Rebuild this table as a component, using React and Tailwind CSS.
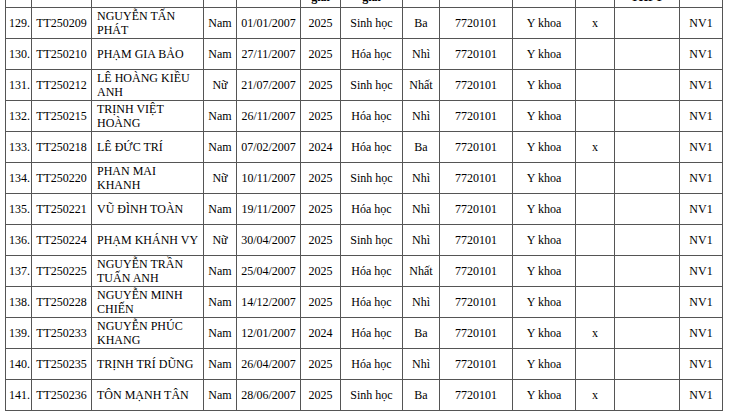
const rows = [
    ["129.", "TT250209", ["NGUYỄN TẤN", "PHÁT"], "Nam", "01/01/2007", "2025", "Sinh học", "Ba", "x"],
    ["130.", "TT250210", ["PHẠM GIA BẢO"], "Nam", "27/11/2007", "2025", "Hóa học", "Nhì", ""],
    ["131.", "TT250212", ["LÊ HOÀNG KIỀU", "ANH"], "Nữ", "21/07/2007", "2025", "Sinh học", "Nhất", ""],
    ["132.", "TT250215", ["TRỊNH VIỆT", "HOÀNG"], "Nam", "26/11/2007", "2025", "Hóa học", "Nhì", ""],
    ["133.", "TT250218", ["LÊ ĐỨC TRÍ"], "Nam", "07/02/2007", "2024", "Hóa học", "Ba", "x"],
    ["134.", "TT250220", ["PHAN MAI", "KHANH"], "Nữ", "10/11/2007", "2025", "Sinh học", "Nhì", ""],
    ["135.", "TT250221", ["VŨ ĐÌNH TOÀN"], "Nam", "19/11/2007", "2025", "Hóa học", "Nhì", ""],
    ["136.", "TT250224", ["PHẠM KHÁNH VY"], "Nữ", "30/04/2007", "2025", "Sinh học", "Nhì", ""],
    ["137.", "TT250225", ["NGUYỄN TRẦN", "TUẤN ANH"], "Nam", "25/04/2007", "2025", "Hóa học", "Nhất", ""],
    ["138.", "TT250228", ["NGUYỄN MINH", "CHIẾN"], "Nam", "14/12/2007", "2025", "Hóa học", "Nhì", ""],
    ["139.", "TT250233", ["NGUYỄN PHÚC", "KHANG"], "Nam", "12/01/2007", "2024", "Hóa học", "Ba", "x"],
    ["140.", "TT250235", ["TRỊNH TRÍ DŨNG"], "Nam", "26/04/2007", "2025", "Hóa học", "Nhì", ""],
    ["141.", "TT250236", ["TÔN MẠNH TÂN"], "Nam", "28/06/2007", "2025", "Sinh học", "Ba", "x"],
];

const cell = "border-r border-b border-[#555] flex items-center justify-center";

const App = () => {
    return (
        <div className="w-[730px] h-[417px] bg-white pl-[5px] overflow-hidden text-black text-[12px] leading-[14px] font-['Liberation_Serif','Times_New_Roman',serif]">
            <div className="grid grid-cols-[26px_60px_112px_33px_64px_40px_62px_37px_73px_63px_39px_65px_43px] border-l border-[#555] w-[718px]">
                {/* header row, mostly cut off at the top */}
                {["", "", "", "", "", "giải", "giải", "", "", "", "", "THPT", ""].map((h, i) => (
                    <div key={"h" + i} className="h-[8px] border-r border-b border-[#555] flex items-end justify-center overflow-hidden">
                        <span className="font-bold mb-[3px] whitespace-nowrap">{h}</span>
                    </div>
                ))}
                {rows.map((r) => (
                    <div key={r[0]} className="contents">
                        <div className={`h-[31px] ${cell} !justify-end pr-[1px]`}>{r[0]}</div>
                        <div className={cell}>{r[1]}</div>
                        <div className="border-r border-b border-[#555] flex flex-col justify-center pl-[5px] whitespace-nowrap">
                            {r[2].map((n) => (
                                <span key={n}>{n}</span>
                            ))}
                        </div>
                        <div className={cell}>{r[3]}</div>
                        <div className={cell}>{r[4]}</div>
                        <div className={cell}>{r[5]}</div>
                        <div className={cell}>{r[6]}</div>
                        <div className={cell}>{r[7]}</div>
                        <div className={cell}>7720101</div>
                        <div className={cell}>Y khoa</div>
                        <div className={cell}>{r[8]}</div>
                        <div className={cell}></div>
                        <div className={cell}>NV1</div>
                    </div>
                ))}
            </div>
        </div>
    );
};

export default App;
